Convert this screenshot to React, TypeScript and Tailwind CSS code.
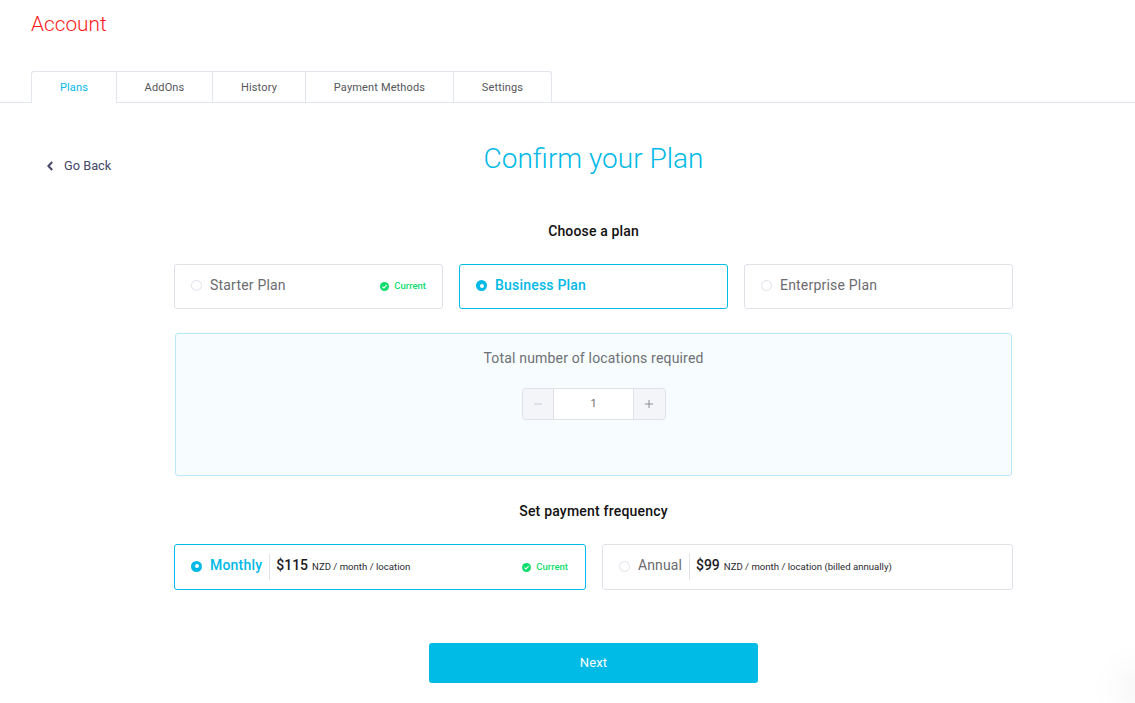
import React from "react";

function Radio({ on }: { on?: boolean }) {
  return on ? (
    <span className="w-[11px] h-[11px] rounded-full bg-[#00b9e6] flex items-center justify-center shrink-0">
      <span className="w-1 h-1 rounded-full bg-white" />
    </span>
  ) : (
    <span className="w-[11px] h-[11px] rounded-full border border-[#dfe1ea] bg-white shrink-0" />
  );
}

function Current() {
  return (
    <span className="ml-auto flex items-center gap-[5px] text-[9.5px] font-medium text-[#0fdc6e] mt-[2px]">
      <svg width="9" height="9" viewBox="0 0 9 9">
        <circle cx="4.5" cy="4.5" r="4.5" fill="#0fdc6e" />
        <path d="M2.4 4.6 L3.9 6 L6.6 3.1" stroke="#fff" strokeWidth="1.1" fill="none" />
      </svg>
      Current
    </span>
  );
}

function PlanCard({ label, on, current }: { label: string; on?: boolean; current?: boolean }) {
  return (
    <div
      className={`flex-1 h-[45px] rounded-[3px] border flex items-center pl-4 pr-4 pb-[2px] bg-white ${
        on ? "border-[#00bbe8]" : "border-[#e0e2ea]"
      }`}
    >
      <Radio on={on} />
      <span className={`ml-2 text-sm tracking-[0.2px] -mt-px ${on ? "text-[#00b9e6] font-medium" : "text-[#6b6b70]"}`}>{label}</span>
      {current && <Current />}
    </div>
  );
}

function FreqCard({
  label,
  price,
  unit,
  on,
  current,
  className,
}: {
  label: string;
  price: string;
  unit: string;
  on?: boolean;
  current?: boolean;
  className: string;
}) {
  return (
    <div
      className={`h-[46px] rounded-[3px] border flex items-center pl-4 pr-[17px] pb-[2px] bg-white ${className} ${
        on ? "border-[#00bbe8]" : "border-[#e0e2ea]"
      }`}
    >
      <Radio on={on} />
      <span className={`ml-2 text-sm -mt-[3px] ${on ? "text-[#00b9e6] font-medium tracking-[0.2px]" : "text-[#6b6b70] tracking-[0.1px]"}`}>{label}</span>
      <span className="ml-[7px] w-px h-[26px] mt-[2px] bg-[#dfe3ea]" />
      <span className="ml-[6px] text-sm font-medium text-[#1b1b1f] -mt-[2px]">{price}</span>
      <span className="ml-1 text-[9.6px] text-[#2a2a30] mt-[2px]">{unit}</span>
      {current && <Current />}
    </div>
  );
}

const tabs = [
  { label: "Plans", w: "w-[86px]" },
  { label: "AddOns", w: "w-[96px]" },
  { label: "History", w: "w-[93px]" },
  { label: "Payment Methods", w: "w-[148px]" },
  { label: "Settings", w: "w-[98px]" },
];

export default function App() {
  return (
    <div className="relative h-[703px] w-full overflow-hidden bg-white font-['Roboto',sans-serif]">
      <h1 className="pl-[31px] pt-[10px] h-[71px] text-[20.8px] leading-[28px] font-light text-[#ff1a1a]">Account</h1>

      <div className="h-[32px] border-b border-[#e3e5ec] pl-[31px] flex">
        {tabs.map((t, i) => (
          <div
            key={t.label}
            className={`${t.w} h-[32px] border-t border-r border-[#e3e5ec] flex items-center justify-center text-[11px] tracking-[0.15px] pt-[2px] ${
              i === 0 ? "border-l bg-white text-[#00b9e6] rounded-tl-[3px] relative z-10" : "text-[#55555a]"
            } ${i === 4 ? "rounded-tr-[3px]" : ""}`}
          >
            {t.label}
          </div>
        ))}
      </div>

      <div className="relative">
        <div className="absolute left-[47px] top-[53px] flex items-center gap-[11px] text-[12.8px] text-[#45466b]">
          <svg width="6" height="10" viewBox="0 0 6 10">
            <path d="M5.2 1 L1.4 5 L5.2 9" stroke="#45466b" strokeWidth="2" fill="none" />
          </svg>
          Go Back
        </div>

        <div className="w-[839px] ml-[174px]">
          <h2 className="pt-[38px] text-center text-[28px] leading-[36px] font-light text-[#00b9e6]">
            Confirm your Plan
          </h2>

          <p className="mt-[44px] text-center text-sm leading-[20px] font-medium text-[#111] tracking-[0.15px]">Choose a plan</p>

          <div className="mt-[23px] flex gap-4">
            <PlanCard label="Starter Plan" current />
            <PlanCard label="Business Plan" on />
            <PlanCard label="Enterprise Plan" />
          </div>

          <div className="mt-6 mx-px h-[143px] rounded-[3px] border border-[#b8e8fa] bg-[#f7fcff] flex flex-col items-center pt-[14px]">
            <p className="text-sm leading-[20px] text-[#6d7074] tracking-[0.18px]">Total number of locations required</p>
            <div className="mt-[20px] w-[144px] h-[32px] flex rounded-[3px] border border-[#e0e2ea] overflow-hidden text-[#8a8d94]">
              <div className="w-[31px] bg-[#f4f5f9] border-r border-[#e0e2ea] flex items-center justify-center">
                <svg width="10" height="10" viewBox="0 0 10 10">
                  <path d="M1 5 H9" stroke="#c9ccd3" strokeWidth="1" />
                </svg>
              </div>
              <div className="flex-1 bg-white flex items-center justify-center text-[11px] text-[#6d7074] pl-px">1</div>
              <div className="w-[32px] bg-[#f4f5f9] border-l border-[#e0e2ea] flex items-center justify-center">
                <svg width="10" height="10" viewBox="0 0 10 10">
                  <path d="M1 5 H9 M5 1 V9" stroke="#8a8d94" strokeWidth="1" />
                </svg>
              </div>
            </div>
          </div>

          <p className="mt-[25px] text-center text-sm leading-[20px] font-medium text-[#111] tracking-[0.2px]">Set payment frequency</p>

          <div className="mt-[23px] flex gap-4">
            <FreqCard className="w-[412px]" label="Monthly" price="$115" unit="NZD / month / location" on current />
            <FreqCard className="flex-1" label="Annual" price="$99" unit="NZD / month / location (billed annually)" />
          </div>

          <div className="mt-[53px] flex justify-center">
            <button className="w-[329px] h-[40px] rounded-[3px] bg-[#00bbe6] text-[13px] text-white tracking-[0.2px]">Next</button>
          </div>
        </div>
      </div>

      <div className="absolute -right-[30px] -bottom-[10px] w-[50px] h-[50px] rounded-full bg-black/[0.03] blur-[14px]" />
    </div>
  );
}
